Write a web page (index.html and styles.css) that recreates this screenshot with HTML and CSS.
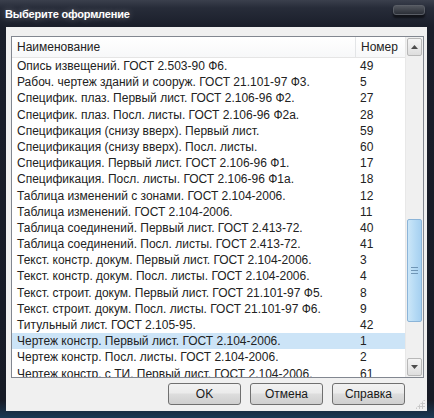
FILE: index.html
```html
<!DOCTYPE html>
<html lang="ru">
<head>
    <meta charset="UTF-8">
    <title>Выберите оформление</title>
    <link rel="stylesheet" href="styles.css">
</head>
<body>
    <div class="window">
        <div class="titlebar">
            <span class="title">Выберите оформление</span>
            <span class="close-btn"></span>
        </div>
        <div class="client">
            <div class="listbox">
                <div class="list-main">
                    <div class="list-header">
                        <div class="col-name">Наименование</div>
                        <div class="col-num">Номер</div>
                    </div>
                    <div class="list-rows" id="rows"></div>
                </div>
                <div class="scrollbar">
                    <div class="sb-btn">
                        <svg width="7" height="4" viewBox="0 0 7 4"><path d="M0 4 L3.5 0 L7 4 Z" fill="#4d4d4d"/></svg>
                    </div>
                    <div class="sb-track">
                        <div class="sb-thumb">
                            <span class="grip"></span>
                        </div>
                    </div>
                    <div class="sb-btn">
                        <svg width="7" height="4" viewBox="0 0 7 4"><path d="M0 0 L3.5 4 L7 0 Z" fill="#4d4d4d"/></svg>
                    </div>
                </div>
            </div>
            <div class="buttons">
                <button>OK</button>
                <button>Отмена</button>
                <button>Справка</button>
            </div>
            <span class="size-grip"></span>
        </div>
    </div>

    <script>
        const items = [
            ['Опись извещений. ГОСТ 2.503-90 Ф6.', 49],
            ['Рабоч. чертеж зданий и сооруж. ГОСТ 21.101-97 Ф3.', 5],
            ['Специфик. плаз. Первый лист. ГОСТ 2.106-96 Ф2.', 27],
            ['Специфик. плаз. Посл. листы. ГОСТ 2.106-96 Ф2а.', 28],
            ['Спецификация (снизу вверх). Первый лист.', 59],
            ['Спецификация (снизу вверх). Посл. листы.', 60],
            ['Спецификация. Первый лист. ГОСТ 2.106-96 Ф1.', 17],
            ['Спецификация. Посл. листы. ГОСТ 2.106-96 Ф1а.', 18],
            ['Таблица изменений с зонами. ГОСТ 2.104-2006.', 12],
            ['Таблица изменений. ГОСТ 2.104-2006.', 11],
            ['Таблица соединений. Первый лист. ГОСТ 2.413-72.', 40],
            ['Таблица соединений. Посл. листы. ГОСТ 2.413-72.', 41],
            ['Текст. констр. докум. Первый лист. ГОСТ 2.104-2006.', 3],
            ['Текст. констр. докум. Посл. листы. ГОСТ 2.104-2006.', 4],
            ['Текст. строит. докум. Первый лист. ГОСТ 21.101-97 Ф5.', 8],
            ['Текст. строит. докум. Посл. листы. ГОСТ 21.101-97 Ф6.', 9],
            ['Титульный лист. ГОСТ 2.105-95.', 42],
            ['Чертеж констр. Первый лист. ГОСТ 2.104-2006.', 1],
            ['Чертеж констр. Посл. листы. ГОСТ 2.104-2006.', 2],
            ['Чертеж констр. с ТИ. Первый лист. ГОСТ 2.104-2006.', 61]
        ];
        const selected = 17;

        document.getElementById('rows').innerHTML = items.map((item, index) => `
            <div class="row${index === selected ? ' selected' : ''}">
                <div class="col-name">${item[0]}</div>
                <div class="col-num">${item[1]}</div>
            </div>
        `).join('');
    </script>
</body>
</html>
```

FILE: styles.css
```css
body {
    margin: 0;
    background: #141824;
    font-family: "Liberation Sans", Arial, sans-serif;
}

.window {
    width: 434px;
    height: 418px;
    display: flex;
    flex-direction: column;
    background: linear-gradient(#3b404d 0, #272c39 8px, #1a1e2a 27px, #161a25 400px, #1b3a55 418px);
    box-sizing: border-box;
    padding: 0 7px 7px 6px;
}

.titlebar {
    height: 27px;
    display: flex;
    align-items: flex-start;
    justify-content: space-between;
    flex-shrink: 0;
}

.title {
    color: #fff;
    font-size: 11px;
    font-weight: bold;
    margin-top: 8px;
    margin-left: -1px;
    letter-spacing: -0.2px;
    text-shadow: 0 0 6px rgba(255, 255, 255, 0.35);
}

.close-btn {
    width: 30px;
    height: 8px;
    margin-top: 5px;
    margin-right: 2px;
    border: 1px solid #5a5e66;
    border-radius: 3px;
    background: linear-gradient(#52565e, #2b2f37);
    box-shadow: 0 3px 2px rgba(0, 0, 0, 0.5);
}

.client {
    flex: 1;
    background: #f0f0f0;
    position: relative;
    padding: 9px 3px 0 5px;
    display: flex;
    flex-direction: column;
}

.listbox {
    height: 340px;
    border: 1px solid #828790;
    background: #fff;
    display: flex;
}

.list-main {
    flex: 1;
    overflow: hidden;
}

.list-header {
    height: 20px;
    display: flex;
    align-items: center;
    background: linear-gradient(#fff, #f7f8f9);
    border-bottom: 1px solid #e5e5e5;
    font-size: 12px;
    color: #222;
}

.list-header .col-name {
    border-right: 1px solid #e3e5e7;
    height: 20px;
    line-height: 20px;
}

.col-name {
    width: 338px;
    padding-left: 5px;
    white-space: nowrap;
    overflow: hidden;
}

.col-num {
    padding-left: 5px;
}

.row {
    height: 16.2px;
    line-height: 16.2px;
    display: flex;
    font-size: 12px;
    color: #222;
}

.row.selected {
    background: #cce4f7;
}

.scrollbar {
    width: 17px;
    display: flex;
    flex-direction: column;
    background: #f0f0f0;
    border-left: 1px solid #e8e8e8;
}

.sb-btn {
    height: 16px;
    margin: 1px 1px 0 1px;
    border: 1px solid #b8b8b8;
    border-radius: 2px;
    background: linear-gradient(#f5f5f5, #dedede);
    display: flex;
    align-items: center;
    justify-content: center;
}

.sb-btn:last-child {
    margin: 0 1px 1px 1px;
}

.sb-track {
    flex: 1;
    display: flex;
    flex-direction: column;
}

.sb-thumb {
    margin: 163px 1px 0 1px;
    height: 101px;
    border: 1px solid #8bb4d8;
    border-radius: 2px;
    background: linear-gradient(90deg, #cbe6f8, #b3d9f4 60%, #a6d0f0);
    display: flex;
    align-items: center;
    justify-content: center;
}

.grip {
    width: 7px;
    height: 5px;
    border-top: 1px solid #6f95b5;
    border-bottom: 1px solid #6f95b5;
    position: relative;
}

.grip::after {
    content: "";
    position: absolute;
    left: 0;
    right: 0;
    top: 2px;
    border-top: 1px solid #6f95b5;
}

.buttons {
    display: flex;
    justify-content: flex-end;
    gap: 9px;
    margin-top: 5px;
    padding-right: 19px;
}

button {
    width: 73px;
    height: 22px;
    font-family: "Liberation Sans", Arial, sans-serif;
    font-size: 12px;
    color: #1a1a1a;
    border: 1px solid #707070;
    border-radius: 3px;
    background: linear-gradient(#f2f2f2 0, #ebebeb 45%, #dddddd 50%, #cfcfcf 100%);
    padding: 0;
}

.size-grip {
    position: absolute;
    right: 2px;
    bottom: 2px;
    width: 10px;
    height: 10px;
    background: radial-gradient(circle, #c8c8c8 1px, transparent 1.2px) 0 0 / 3px 3px;
    clip-path: polygon(100% 0, 100% 100%, 0 100%);
}
```
